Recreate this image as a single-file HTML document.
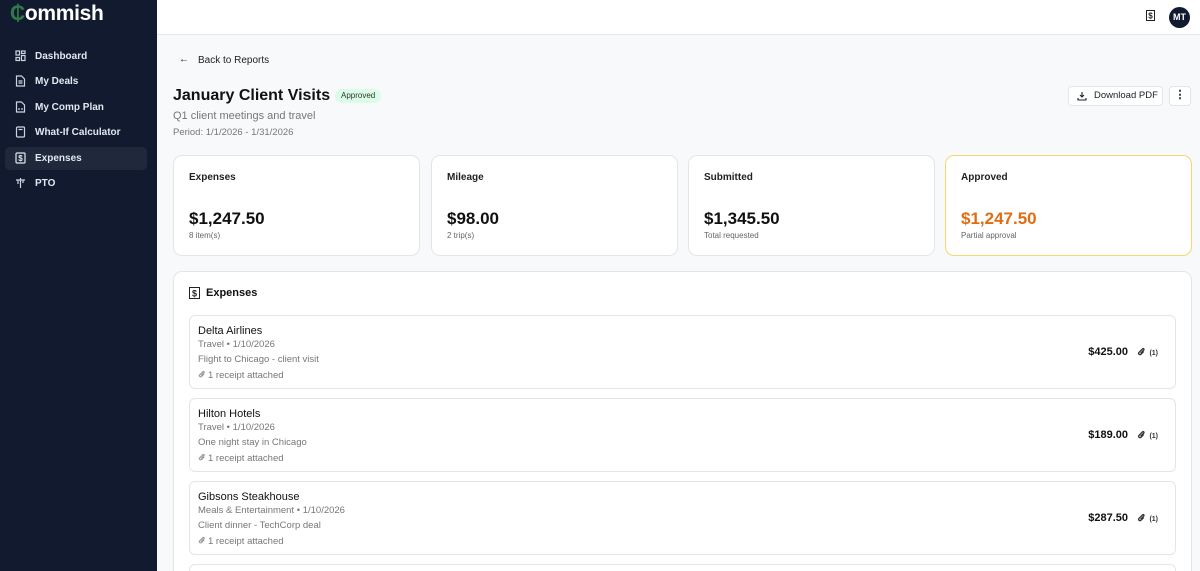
<!DOCTYPE html><html style="width:1200px;height:571px;overflow:hidden"><head><style>
*{box-sizing:border-box;margin:0;padding:0}
body{width:1200px;height:571px;overflow:hidden;font-family:"Liberation Sans",sans-serif;background:#f8f9fb;position:relative;color:#111}
.sb{position:absolute;left:0;top:0;width:157px;height:571px;background:#111a2e}
.logo{position:absolute;left:10px;top:2px;font-size:21px;font-weight:bold;color:#fff;letter-spacing:-0.3px}
.logo span{color:#2f7a4a}
.nav{position:absolute;left:5px;width:142px;height:23px;border-radius:5px;color:#e2e8f0;font-size:10px;font-weight:bold;display:flex;align-items:center;padding-left:30px}
.nav.act{background:#1f293b}
.nav svg{position:absolute;left:10px;top:5px}
.hdr{position:absolute;left:157px;top:0;right:0;height:35px;background:#fff;border-bottom:1px solid #e5e7eb}
.av{position:absolute;right:10px;top:7px;width:21px;height:21px;border-radius:50%;background:#111a2e;color:#fff;font-size:9px;font-weight:bold;text-align:center;line-height:21px}
.t{position:absolute;white-space:nowrap}
.card{position:absolute;background:#fff;border:1px solid #e3e5e8;border-radius:9px}
.card .l{position:absolute;left:15px;top:16px;font-size:10px;font-weight:bold;color:#222}
.card .v{position:absolute;left:15px;top:53px;font-size:17px;font-weight:bold}
.card .s{position:absolute;left:15px;top:75px;font-size:8px;color:#666}
.item{position:absolute;left:189px;width:987px;height:74px;background:#fff;border:1px solid #e3e5e8;border-radius:6px}
.item .n{position:absolute;left:8px;top:9px;font-size:11px;color:#111}
.item .c{position:absolute;left:8px;top:23px;font-size:9.5px;color:#777}
.item .d{position:absolute;left:8px;top:38px;font-size:9.5px;color:#777}
.item .r{position:absolute;left:8px;top:54px;font-size:9.5px;color:#777}
.item .r svg{vertical-align:-1px;margin-right:2px}
.item .p{position:absolute;right:47px;top:30px;font-size:11px;font-weight:bold}
.item .a{position:absolute;right:17px;top:31px;font-size:7px;font-weight:bold;color:#333}
.item .a svg{vertical-align:-2px;margin-right:3px}
</style></head><body>
<div class="sb">
<div class="logo"><span>₵</span>ommish</div>
<div class="nav" style="top:45px"><svg width="11" height="12" viewBox="0 0 11 12" fill="none" stroke="#cbd5e1" stroke-width="1.2"><rect x="1" y="1" width="3.5" height="4"/><rect x="6.5" y="1" width="3.5" height="2.5"/><rect x="1" y="7.5" width="3.5" height="3"/><rect x="6.5" y="5.5" width="3.5" height="5"/></svg>Dashboard</div>
<div class="nav" style="top:70px"><svg width="11" height="12" viewBox="0 0 11 12" fill="none" stroke="#cbd5e1" stroke-width="1.2"><path d="M1.5 1h5l3 3v7h-8z M3.5 6h4 M3.5 8h4"/></svg>My Deals</div>
<div class="nav" style="top:96px"><svg width="11" height="12" viewBox="0 0 11 12" fill="none" stroke="#cbd5e1" stroke-width="1.2"><path d="M1.5 1h5l3 3v7h-8z M4 7v2 M7 7v2"/></svg>My Comp Plan</div>
<div class="nav" style="top:121px"><svg width="11" height="12" viewBox="0 0 11 12" fill="none" stroke="#cbd5e1" stroke-width="1.2"><rect x="1.5" y="1" width="8" height="10" rx="1"/><path d="M3.5 3.5h4"/></svg>What-If Calculator</div>
<div class="nav act" style="top:147px"><svg width="11" height="12" viewBox="0 0 11 12" fill="none" stroke="#e2e8f0" stroke-width="1.2"><rect x="1" y="1" width="9" height="10" rx="1"/><text x="5.5" y="9" font-size="8" text-anchor="middle" fill="#e2e8f0" stroke="none" font-weight="bold">$</text></svg>Expenses</div>
<div class="nav" style="top:172px"><svg width="11" height="12" viewBox="0 0 11 12" fill="none" stroke="#cbd5e1" stroke-width="1.2"><path d="M1 3h9 M3 3v4 M5.5 1v10 M8 3v3"/></svg>PTO</div>
</div>
<div class="hdr"><svg style="position:absolute;right:45px;top:10px" width="9" height="11" viewBox="0 0 9 11"><rect x=".5" y=".5" width="8" height="10" fill="none" stroke="#222"/><text x="4.5" y="8.5" font-size="8" font-weight="bold" text-anchor="middle" fill="#222">$</text></svg><div class="av">MT</div></div>
<div class="t" style="left:179px;top:54px;font-size:10px">←</div>
<div class="t" style="left:198px;top:55px;font-size:10px;color:#222">Back to Reports</div>
<div class="t" style="left:173px;top:87px;font-size:16px;font-weight:bold">January Client Visits</div>
<div class="t" style="left:335px;top:89px;height:14px;padding:0 6px;background:#dcfce7;border-radius:7px;font-size:8px;line-height:14px;color:#333">Approved</div>
<div class="t" style="left:173px;top:110px;font-size:11px;color:#777">Q1 client meetings and travel</div>
<div class="t" style="left:173px;top:127px;font-size:9.5px;color:#777">Period: 1/1/2026 - 1/31/2026</div>
<div class="t" style="left:1068px;top:86px;width:95px;height:20px;background:#fff;border:1px solid #e3e5e8;border-radius:4px;font-size:9.5px;line-height:18px;padding-left:25px;color:#222">Download PDF<svg style="position:absolute;left:8px;top:4px" width="10" height="10" viewBox="0 0 10 10" fill="none" stroke="#222" stroke-width="1.1"><path d="M5 1v5 M3 4l2 2 2-2 M1 7v2h8V7"/></svg></div>
<div class="t" style="left:1169px;top:86px;width:22px;height:20px;background:#fff;border:1px solid #e3e5e8;border-radius:4px;font-size:11px;line-height:17px;text-align:center;font-weight:bold">⋮</div>
<div class="card" style="left:173px;top:155px;width:247px;height:101px"><div class="l">Expenses</div><div class="v">$1,247.50</div><div class="s">8 item(s)</div></div>
<div class="card" style="left:431px;top:155px;width:247px;height:101px"><div class="l">Mileage</div><div class="v">$98.00</div><div class="s">2 trip(s)</div></div>
<div class="card" style="left:688px;top:155px;width:247px;height:101px"><div class="l">Submitted</div><div class="v">$1,345.50</div><div class="s">Total requested</div></div>
<div class="card" style="left:945px;top:155px;width:247px;height:101px;border-color:#f5d774"><div class="l">Approved</div><div class="v" style="color:#e06d12">$1,247.50</div><div class="s">Partial approval</div></div>
<div class="card" style="left:173px;top:271px;width:1019px;height:320px"></div>
<svg style="position:absolute;left:189px;top:287px" width="11" height="12" viewBox="0 0 11 12"><rect x=".5" y=".5" width="10" height="11" fill="none" stroke="#222"/><text x="5.5" y="9.5" font-size="9" font-weight="bold" text-anchor="middle" fill="#222">$</text></svg>
<div class="t" style="left:206px;top:287px;font-size:11px;font-weight:bold">Expenses</div>
<div class="item" style="top:315px"><div class="n">Delta Airlines</div><div class="c">Travel • 1/10/2026</div><div class="d">Flight to Chicago - client visit</div><div class="r"><svg width="8" height="9" viewBox="0 0 8 9"><path d="M6 4L3.5 6.5a1.2 1.2 0 01-1.7-1.7L5 1.6a.8.8 0 011.1 1.1L3.2 5.6" fill="none" stroke="#999" stroke-width="1.2"/></svg>1 receipt attached</div><div class="p">$425.00</div><div class="a"><svg width="9" height="10" viewBox="0 0 8 9"><path d="M6 4L3.5 6.5a1.2 1.2 0 01-1.7-1.7L5 1.6a.8.8 0 011.1 1.1L3.2 5.6" fill="none" stroke="#333" stroke-width="1.2"/></svg>(1)</div></div>
<div class="item" style="top:398px"><div class="n">Hilton Hotels</div><div class="c">Travel • 1/10/2026</div><div class="d">One night stay in Chicago</div><div class="r"><svg width="8" height="9" viewBox="0 0 8 9"><path d="M6 4L3.5 6.5a1.2 1.2 0 01-1.7-1.7L5 1.6a.8.8 0 011.1 1.1L3.2 5.6" fill="none" stroke="#999" stroke-width="1.2"/></svg>1 receipt attached</div><div class="p">$189.00</div><div class="a"><svg width="9" height="10" viewBox="0 0 8 9"><path d="M6 4L3.5 6.5a1.2 1.2 0 01-1.7-1.7L5 1.6a.8.8 0 011.1 1.1L3.2 5.6" fill="none" stroke="#333" stroke-width="1.2"/></svg>(1)</div></div>
<div class="item" style="top:481px"><div class="n">Gibsons Steakhouse</div><div class="c">Meals &amp; Entertainment • 1/10/2026</div><div class="d">Client dinner - TechCorp deal</div><div class="r"><svg width="8" height="9" viewBox="0 0 8 9"><path d="M6 4L3.5 6.5a1.2 1.2 0 01-1.7-1.7L5 1.6a.8.8 0 011.1 1.1L3.2 5.6" fill="none" stroke="#999" stroke-width="1.2"/></svg>1 receipt attached</div><div class="p">$287.50</div><div class="a"><svg width="9" height="10" viewBox="0 0 8 9"><path d="M6 4L3.5 6.5a1.2 1.2 0 01-1.7-1.7L5 1.6a.8.8 0 011.1 1.1L3.2 5.6" fill="none" stroke="#333" stroke-width="1.2"/></svg>(1)</div></div>
<div class="item" style="top:564px;height:7px;border-bottom:none;border-radius:6px 6px 0 0"></div>
</body></html>
